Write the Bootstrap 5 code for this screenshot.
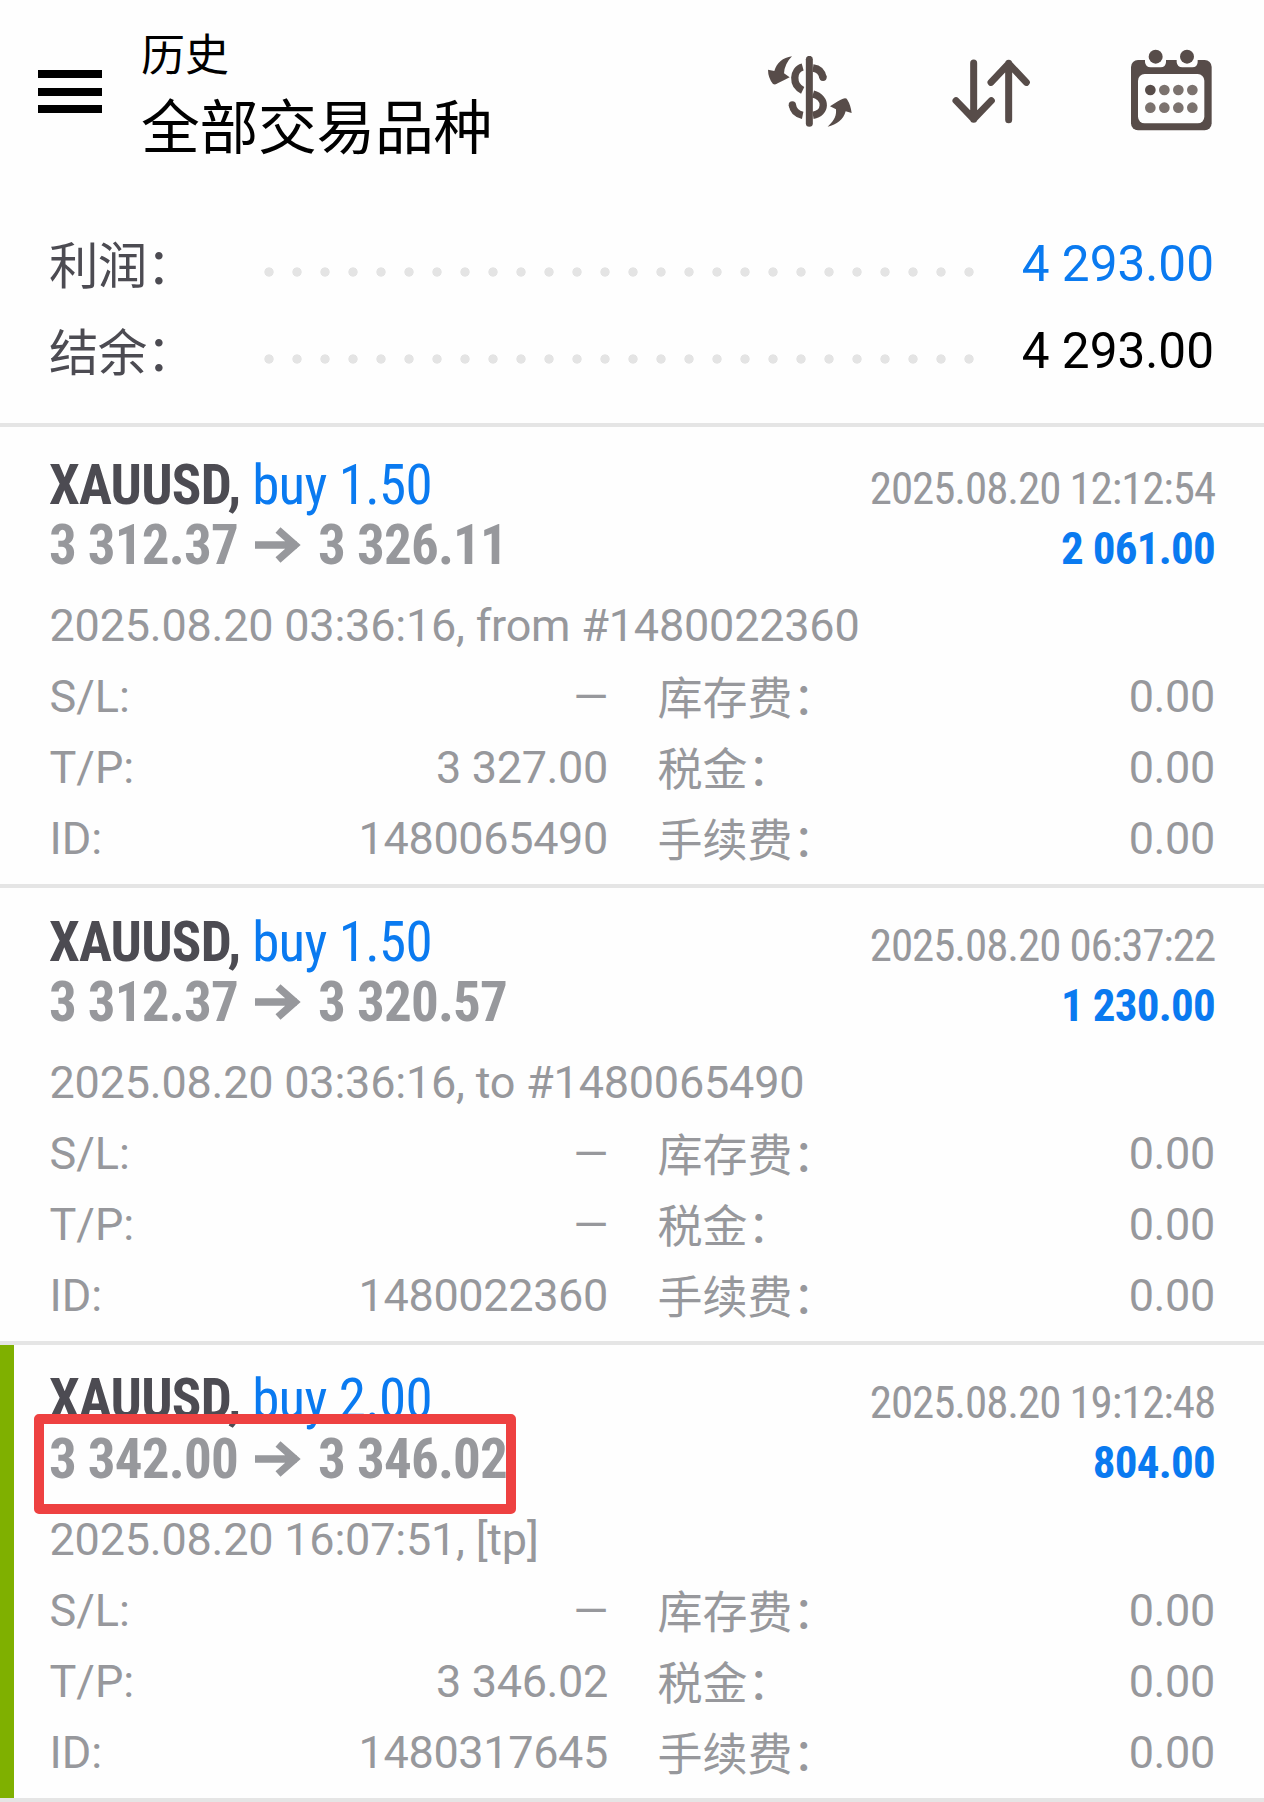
<!DOCTYPE html>
<html lang="zh-CN">
<head>
<meta charset="utf-8">
<meta name="viewport" content="width=device-width, initial-scale=1">
<title>历史</title>
<link href="https://cdn.jsdelivr.net/npm/bootstrap@5.3.0/dist/css/bootstrap.min.css" rel="stylesheet">
<style>
body{font-family:Roboto,"Noto Sans CJK SC",sans-serif;color:#97989c;background:#fefefe;font-size:45px;overflow:hidden}
.topbar{height:220px;padding:0 52px 0 38px;color:#000}
.burger{width:64px;height:43px;margin-top:70px}
.burger i{display:block;height:8px;background:#000}
.heads{margin-left:39px;padding-top:23px}
.sub-t{font-size:44px;line-height:66px}
.main-t{font-size:58.8px;line-height:79px;letter-spacing:-.3px}
.ic-a{margin:56px 99px 0 0}.ic-b{margin:59px 101px 0 0}.ic-c{margin-top:49px}
.sums{height:203px;padding:0 50px 0 49px;font-size:49.5px}
.sum-row{height:87px;line-height:89px}
.lbl{width:205.5px;color:#4c4b52;letter-spacing:-.8px;padding-top:3px}
.dots{width:728px;height:28px;margin-top:38px;background:radial-gradient(circle at center,#e4e4e4 4.3px,transparent 5px) 0 0/28.01px 28px repeat-x}
.rule{height:4px;background:#e5e5e5}
.blue{color:#0a7af0}
.deal{height:457px;padding:24px 49px 0;border-bottom:4px solid #e5e5e5;position:relative}
.first-deal{height:461px;padding-top:28px}
.flagged::before{content:"";position:absolute;left:0;top:0;bottom:0;width:14px;background:#7fb000}
.cond{font-stretch:75%}
.t-row{height:60px;line-height:60px}
.stamp{letter-spacing:-1.1px;padding-top:4px}
.gain{letter-spacing:-.75px;padding-top:4px}
.sym{font-size:55px;white-space:pre;letter-spacing:-.8px}
.sym .blue{letter-spacing:-.65px}
.sym b{color:#4c4b52}
.arrow{width:46px;height:36px;margin:0 17px 0 17px}
.l-row{height:71px;line-height:71px;letter-spacing:-.35px}
.opened{margin-top:15px;letter-spacing:-.22px;padding-left:.5px}
.half-l{width:559px}
.half-l span:first-child{letter-spacing:0;padding-left:.5px}
.half-r{padding-left:49.5px}
.cjk{padding-top:3px;letter-spacing:0}
.frame{position:absolute;left:34px;top:69px;width:482px;height:100px;border:10px solid #ee4141;border-radius:5px}
</style>
</head>
<body>
<header class="topbar d-flex align-items-start">
 <div class="burger d-flex flex-column justify-content-between"><i></i><i></i><i></i></div>
 <div class="heads"><div class="sub-t">历史</div><div class="main-t">全部交易品种</div></div>
 <div class="d-flex ms-auto align-items-start">
  <svg class="ic-a" width="86" height="71" viewBox="79 78 258 213" fill="#574c49"><g fill="none" stroke="#574c49"><path stroke-width="21" stroke-linecap="round" d="M206 88V280"/><path stroke-width="22" d="M186 111C156 119 153 165 186 181M217 192C260 204 256 250 217 256M217 114C234 116 244 126 247 143M186 256C166 252 157 240 155 224"/></g><circle cx="247" cy="142" r="11"/><circle cx="155" cy="225" r="11"/><path d="M154 79C126 83 109 98 101 123L82 119Q82 143 97 162Q105 165 111 160Q128 152 147 142L130 130Q132 101 154 79ZM261 290C284 269 287 256 286 238L268 229Q291 213 307 206Q317 203 320 209Q330 225 333 249L315 244C308 269 289 284 261 290Z"/></svg>
  <svg class="ic-b" width="78" height="65" viewBox="636 87 234 195" fill="none" stroke="#574c49" stroke-width="21" stroke-linecap="round" stroke-linejoin="round"><path d="M701 99V268M648 212L701 267L754 212M806 269V100M753 157L806 101L859 157"/></svg>
  <svg class="ic-c" width="81" height="82" viewBox="1173 56 243 246" fill="#574c49"><rect x="1173" y="89" width="242" height="211" rx="21"/><g fill="#fefefe"><path d="M1215 86V96Q1217 111 1232 111H1262Q1277 111 1278 96V86ZM1310 86V96Q1312 111 1327 111H1357Q1372 111 1373 96V86Z"/><rect x="1194" y="131" width="199" height="148" rx="20"/></g><circle cx="1247" cy="79" r="21"/><circle cx="1341" cy="79" r="21"/><circle cx="1231" cy="179" r="16"/><g fill="#7b726e"><circle cx="1273" cy="179" r="16"/><circle cx="1315" cy="179" r="16"/><circle cx="1357" cy="179" r="16"/><circle cx="1231" cy="232" r="16"/><circle cx="1273" cy="232" r="16"/><circle cx="1315" cy="232" r="16"/><circle cx="1357" cy="232" r="16"/></g></svg>
 </div>
</header>
<section class="sums">
 <div class="sum-row d-flex"><span class="lbl">利润：</span><span class="dots"></span><span class="ms-auto blue">4 293.00</span></div>
 <div class="sum-row d-flex"><span class="lbl">结余：</span><span class="dots"></span><span class="ms-auto text-black">4 293.00</span></div>
</section>
<div class="rule"></div>
<main>
<article class="deal first-deal">
 <div class="t-row d-flex justify-content-between"><div class="sym cond"><b>XAUUSD,</b> <span class="blue">buy 1.50</span></div><div class="cond stamp">2025.08.20 12:12:54</div></div>
 <div class="t-row d-flex justify-content-between"><div class="sym cond fw-bold d-flex align-items-center"><span>3 312.37</span><svg class="arrow" viewBox="0 0 46 36" fill="none" stroke="#97989c" stroke-width="7.5"><path d="M0 18H42M23 3L40 18L23 33"/></svg><span>3 326.11</span></div><div class="cond gain fw-bold blue">2 061.00</div></div>
 <div class="l-row opened">2025.08.20 03:36:16, from #1480022360</div>
 <div class="l-row d-flex"><div class="half-l d-flex justify-content-between"><span>S/L:</span><span>—</span></div><div class="flex-fill d-flex justify-content-between half-r"><span class="cjk">库存费：</span><span>0.00</span></div></div>
 <div class="l-row d-flex"><div class="half-l d-flex justify-content-between"><span>T/P:</span><span>3 327.00</span></div><div class="flex-fill d-flex justify-content-between half-r"><span class="cjk">税金：</span><span>0.00</span></div></div>
 <div class="l-row d-flex"><div class="half-l d-flex justify-content-between"><span>ID:</span><span>1480065490</span></div><div class="flex-fill d-flex justify-content-between half-r"><span class="cjk">手续费：</span><span>0.00</span></div></div>
</article>
<article class="deal">
 <div class="t-row d-flex justify-content-between"><div class="sym cond"><b>XAUUSD,</b> <span class="blue">buy 1.50</span></div><div class="cond stamp">2025.08.20 06:37:22</div></div>
 <div class="t-row d-flex justify-content-between"><div class="sym cond fw-bold d-flex align-items-center"><span>3 312.37</span><svg class="arrow" viewBox="0 0 46 36" fill="none" stroke="#97989c" stroke-width="7.5"><path d="M0 18H42M23 3L40 18L23 33"/></svg><span>3 320.57</span></div><div class="cond gain fw-bold blue">1 230.00</div></div>
 <div class="l-row opened">2025.08.20 03:36:16, to #1480065490</div>
 <div class="l-row d-flex"><div class="half-l d-flex justify-content-between"><span>S/L:</span><span>—</span></div><div class="flex-fill d-flex justify-content-between half-r"><span class="cjk">库存费：</span><span>0.00</span></div></div>
 <div class="l-row d-flex"><div class="half-l d-flex justify-content-between"><span>T/P:</span><span>—</span></div><div class="flex-fill d-flex justify-content-between half-r"><span class="cjk">税金：</span><span>0.00</span></div></div>
 <div class="l-row d-flex"><div class="half-l d-flex justify-content-between"><span>ID:</span><span>1480022360</span></div><div class="flex-fill d-flex justify-content-between half-r"><span class="cjk">手续费：</span><span>0.00</span></div></div>
</article>
<article class="deal flagged">
 <div class="t-row d-flex justify-content-between"><div class="sym cond"><b>XAUUSD,</b> <span class="blue">buy 2.00</span></div><div class="cond stamp">2025.08.20 19:12:48</div></div>
 <div class="t-row d-flex justify-content-between"><div class="sym cond fw-bold d-flex align-items-center"><span>3 342.00</span><svg class="arrow" viewBox="0 0 46 36" fill="none" stroke="#97989c" stroke-width="7.5"><path d="M0 18H42M23 3L40 18L23 33"/></svg><span>3 346.02</span></div><div class="cond gain fw-bold blue">804.00</div></div>
 <div class="l-row opened">2025.08.20 16:07:51, [tp]</div>
 <div class="l-row d-flex"><div class="half-l d-flex justify-content-between"><span>S/L:</span><span>—</span></div><div class="flex-fill d-flex justify-content-between half-r"><span class="cjk">库存费：</span><span>0.00</span></div></div>
 <div class="l-row d-flex"><div class="half-l d-flex justify-content-between"><span>T/P:</span><span>3 346.02</span></div><div class="flex-fill d-flex justify-content-between half-r"><span class="cjk">税金：</span><span>0.00</span></div></div>
 <div class="l-row d-flex"><div class="half-l d-flex justify-content-between"><span>ID:</span><span>1480317645</span></div><div class="flex-fill d-flex justify-content-between half-r"><span class="cjk">手续费：</span><span>0.00</span></div></div>
 <div class="frame"></div>
</article>
</main>
<script src="https://cdn.jsdelivr.net/npm/bootstrap@5.3.0/dist/js/bootstrap.bundle.min.js"></script>
</body>
</html>
